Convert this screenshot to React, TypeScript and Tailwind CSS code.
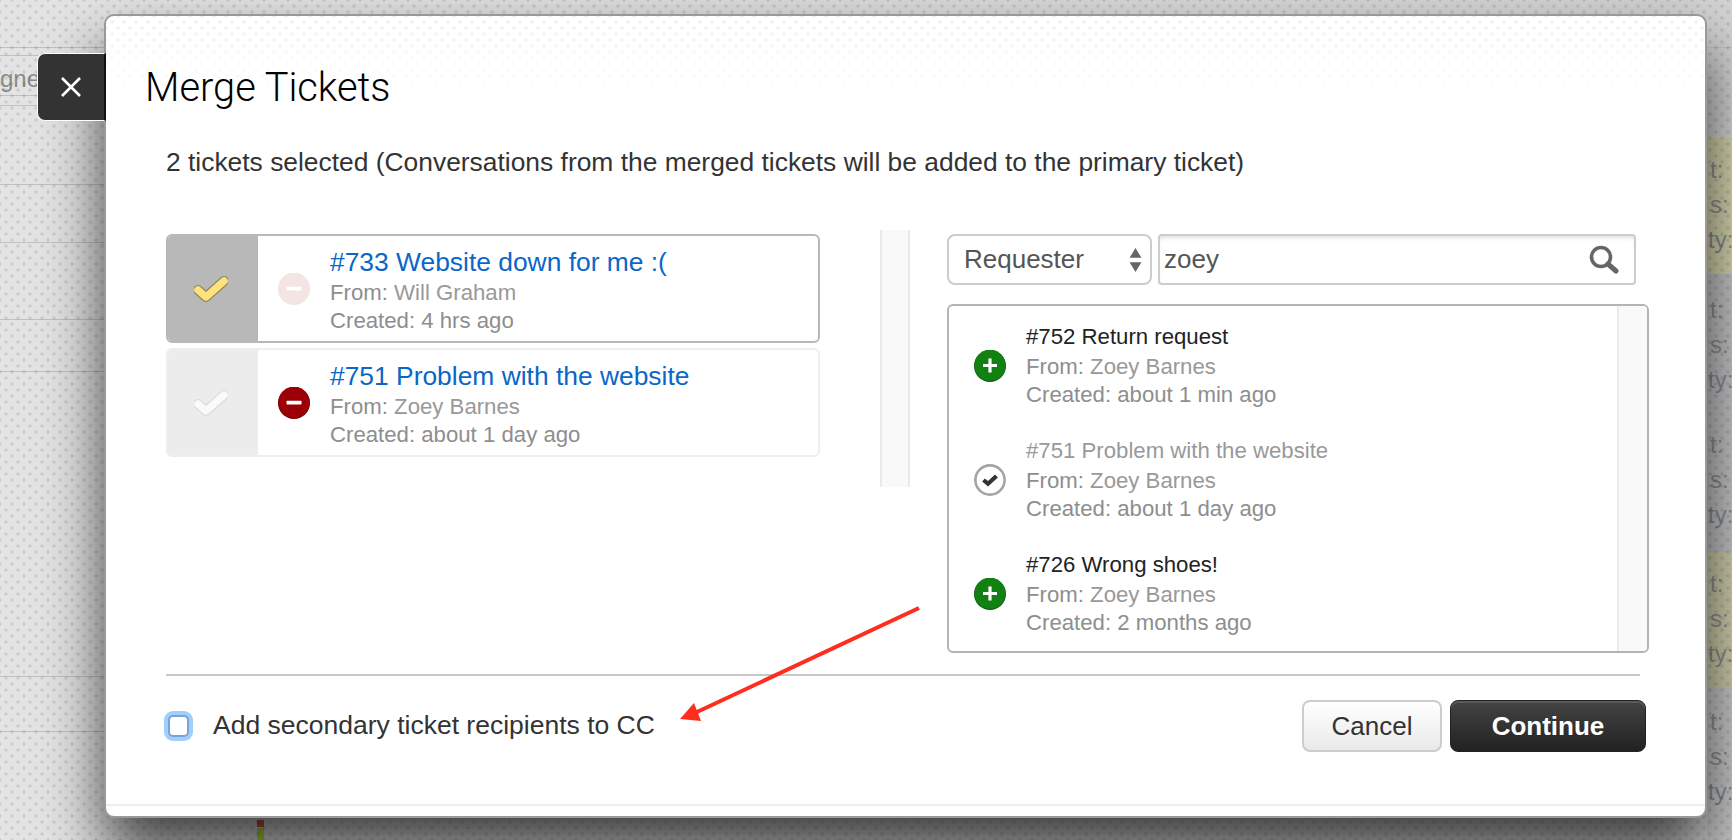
const leftRows = [48, 8, 40, 10, 79, 58, 77, 52, 305, 55];

const rightRows = [
  { h: "h-[138px]", bg: "bg-[#d3d3d3]", pt: "", lines: false },
  { h: "h-[136px]", bg: "bg-[#d4d3ac]", pt: "pt-[14px]", lines: true },
  { h: "h-[137px]", bg: "bg-[#c4c4c6]", pt: "pt-[18px]", lines: true },
  { h: "h-[141px]", bg: "bg-[#c4c4c6]", pt: "pt-[16px]", lines: true },
  { h: "h-[135px]", bg: "bg-[#cfceaa]", pt: "pt-[14px]", lines: true },
  { h: "h-[153px]", bg: "bg-[#c8c8ca]", pt: "pt-[17px]", lines: true },
];

const selected = [
  {
    title: "#733 Website down for me :(",
    from: "Will Graham",
    created: "4 hrs ago",
    primary: true,
  },
  {
    title: "#751 Problem with the website",
    from: "Zoey Barnes",
    created: "about 1 day ago",
    primary: false,
  },
];

const results = [
  { title: "#752 Return request", created: "about 1 min ago", added: false },
  { title: "#751 Problem with the website", created: "about 1 day ago", added: true },
  { title: "#726 Wrong shoes!", created: "2 months ago", added: false },
];

const MinusIcon = ({ faded }: { faded: boolean }) => (
  <svg viewBox="0 0 32 32" className={`w-8 h-8 shrink-0 ${faded ? "opacity-10" : ""}`}>
    <circle cx="16" cy="16" r="16" fill="#6d0000" />
    <circle cx="16" cy="15.2" r="15.6" fill="#9c0006" />
    <rect x="8.5" y="13.8" width="15" height="3.6" rx="0.6" fill="#fff" />
  </svg>
);

const PlusIcon = () => (
  <svg viewBox="0 0 32 32" className="w-8 h-8 shrink-0">
    <circle cx="16" cy="16" r="16" fill="#0c5f0c" />
    <circle cx="16" cy="15.2" r="15.6" fill="#128012" />
    <path d="M16 8.5v14M9 15.5h14" stroke="#fff" strokeWidth="3.2" fill="none" />
  </svg>
);

const AddedIcon = () => (
  <svg viewBox="0 0 32 32" className="w-8 h-8 shrink-0">
    <circle cx="16" cy="16" r="14.6" fill="#fff" stroke="#a4a4a4" strokeWidth="2.6" />
    <path d="M9.5 16l4.5 3.8L22.5 12" stroke="#333" strokeWidth="4.2" fill="none" />
  </svg>
);

const BigCheck = ({ on }: { on: boolean }) => (
  <svg viewBox="0 0 34 30" className="w-[34px] h-[30px] -ml-[4px]">
    <path
      d="M4 16l8 7L30 7"
      fill="none"
      stroke={on ? "#8f8a62" : "#dcdcdc"}
      strokeWidth="10"
      strokeLinejoin="round"
      strokeLinecap="round"
    />
    <path
      d="M4 16l8 7L30 7"
      fill="none"
      stroke={on ? "#ffe27d" : "#fafafa"}
      strokeWidth="7.5"
      strokeLinejoin="round"
      strokeLinecap="round"
    />
  </svg>
);

export default function App() {
  return (
    <div className="relative w-[1732px] h-[840px] overflow-hidden bg-[#dadada] font-['Liberation_Sans',Arial,sans-serif]">
      {/* page behind the dialog */}
      <div className="flex h-full bg-gradient-to-r from-[#e4e4e4] to-[#d2d2d2]">
        <div className="w-[105px] shrink-0">
          {leftRows.map((h, i) => (
            <div
              key={i}
              style={{ height: h }}
              className="border-b border-[#c2c2c2] overflow-hidden text-right pr-[68px] text-[24px] leading-[46px] text-[#8a8a8a]"
            >
              {i === 2 ? "gne" : null}
            </div>
          ))}
        </div>
        <div className="flex-1 flex flex-col justify-end pl-[152px]">
          <div className="w-[7px] h-[7px] bg-[#e05050]" />
          <div className="w-[7px] h-[12px] mt-px bg-[#b4dc44]" />
        </div>
        <div className="w-[25px] shrink-0">
          {rightRows.map((row, i) => (
            <div key={i} className={`${row.h} ${row.bg} ${row.pt} text-[24px] leading-[35px] text-[#8f8f92]`}>
              {row.lines ? (
                <>
                  <div className="pl-[3px]">t:</div>
                  <div className="pl-[3px]">s:</div>
                  <div className="pl-px">ty:</div>
                </>
              ) : (
                <div className="h-[48px] border-b border-[#c4c4c4]" />
              )}
            </div>
          ))}
        </div>
      </div>
      <div className="absolute inset-0 bg-[radial-gradient(circle,rgba(0,0,0,0.085)_1.5px,transparent_2.1px),radial-gradient(circle,rgba(0,0,0,0.085)_1.5px,transparent_2.1px)] bg-[length:12px_12px] bg-[position:0_0,6px_6px]" />

      {/* dialog */}
      <div className="absolute left-[104px] top-[14px] w-[1603px] h-[804px] bg-white border-2 border-[#999] rounded-[10px] overflow-hidden shadow-[0_34px_60px_0_rgba(0,0,0,0.72)]">
        <div className="h-[94px] pt-[49px] pl-[39px] bg-[linear-gradient(rgba(255,255,255,0),#fff_85%),radial-gradient(circle,rgba(0,0,0,0.06)_1.4px,transparent_1.9px),radial-gradient(circle,rgba(0,0,0,0.06)_1.4px,transparent_1.9px)] bg-[length:100%_100%,12px_12px,12px_12px] bg-[position:0_0,0_0,6px_6px]">
          <h1 className="text-[39.8px] leading-[45px] font-light text-black font-['Roboto',sans-serif]">Merge Tickets</h1>
        </div>
        <p className="mt-9 ml-[60px] text-[26.4px] leading-8 text-[#333]">
          2 tickets selected (Conversations from the merged tickets will be added to the primary ticket)
        </p>

        <div className="mt-[52px] h-[423px] flex pl-[60px]">
          <div className="w-[654px] pt-1 flex flex-col gap-[5px]">
            {selected.map((t) => (
              <div
                key={t.title}
                className={`h-[109px] flex border-2 rounded-md overflow-hidden bg-white ${t.primary ? "border-[#b8b8b8]" : "border-[#eee]"}`}
              >
                <div className={`w-[90px] flex items-center justify-center ${t.primary ? "bg-[#b8b8b8]" : "bg-[#ececec]"}`}>
                  <BigCheck on={t.primary} />
                </div>
                <div className="flex items-center pl-5">
                  <MinusIcon faded={t.primary} />
                </div>
                <div className="pl-5 pt-[11px]">
                  <div className="text-[26.4px] leading-[30px] text-[#0a66c8] whitespace-nowrap">{t.title}</div>
                  <div className="text-[22.2px] leading-7 mt-[2px] text-[#8e8e8e]">From: <span className="text-[#999]">{t.from}</span></div>
                  <div className="text-[22.2px] leading-7 text-[#8e8e8e]">Created: {t.created}</div>
                </div>
              </div>
            ))}
          </div>

          <div className="ml-[60px] w-[30px] h-[257px] bg-[#f9f9f9] border-x-2 border-[#e9e9e9]" />

          <div className="ml-[37px] w-[702px] pt-1">
            <div className="flex gap-[6px]">
              <div className="w-[205px] h-[51px] flex items-center justify-between pl-[15px] pr-2 border-2 border-[#ccc] rounded-lg text-[26px] text-[#555]">
                Requester
                <svg viewBox="0 0 12 24" className="w-[13px] h-[26px]">
                  <path d="M6 1l5.5 9H.5zM6 23L.5 14h11z" fill="#666" />
                </svg>
              </div>
              <div className="w-[478px] h-[51px] flex items-center justify-between pl-[4px] pr-[15px] border-2 border-[#ccc] rounded-[4px] shadow-[inset_0_4px_4px_-2px_rgba(0,0,0,0.12)] text-[26px] text-[#555]">
                zoey
                <svg viewBox="0 0 30 30" className="w-[30px] h-[30px]">
                  <circle cx="12" cy="12" r="9.5" fill="none" stroke="#666" strokeWidth="3.6" />
                  <path d="M19 19l8 7" stroke="#666" strokeWidth="5" strokeLinecap="round" />
                </svg>
              </div>
            </div>

            <div className="mt-[19px] h-[349px] flex border-2 border-[#b4b4b4] rounded-md overflow-hidden">
              <div className="flex-1">
                {results.map((r, i) => (
                  <div key={r.title} className={`h-[114px] flex items-center pl-[25px] ${i === 0 ? "mt-[3px]" : ""}`}>
                    {r.added ? <AddedIcon /> : <PlusIcon />}
                    <div className="pl-5">
                      <div className={`text-[22.2px] leading-[28px] ${r.added ? "text-[#999]" : "text-[#222]"}`}>{r.title}</div>
                      <div className="text-[22.2px] leading-7 mt-[2px] text-[#8e8e8e]">From: <span className="text-[#999]">Zoey Barnes</span></div>
                      <div className="text-[22.2px] leading-7 text-[#8e8e8e]">Created: {r.created}</div>
                    </div>
                  </div>
                ))}
              </div>
              <div className="w-[30px] bg-[#f9f9f9] border-l-2 border-[#ececec]" />
            </div>
          </div>
        </div>

        <div className="mt-[21px] ml-[60px] w-[1474px] h-[2px] bg-[#c8c8c8]" />

        <div className="flex items-center justify-between pt-6 pb-[52px] pl-[62px] pr-[59px] border-b-2 border-[#eee]">
          <label className="flex items-center text-[26.5px] text-[#333]">
            <input
              type="checkbox"
              className="appearance-none w-[21px] h-[22px] rounded-[5px] bg-white border-2 border-[#7ba3d6] ring-4 ring-[#a0cffd]"
            />
            <span className="ml-[24px]">Add secondary ticket recipients to CC</span>
          </label>
          <div className="flex gap-2">
            <button className="w-[140px] h-[52px] rounded-lg border-2 border-[#ccc] bg-gradient-to-b from-white to-[#e9e9e9] text-[26px] text-[#333]">
              Cancel
            </button>
            <button className="w-[196px] h-[52px] rounded-lg border border-[#222] bg-gradient-to-b from-[#444] to-[#222] shadow-[inset_0_2px_0_#5a5a5a] text-[26px] font-bold text-white">
              Continue
            </button>
          </div>
        </div>
      </div>

      {/* close tab */}
      <button className="absolute left-[37px] top-[53px] w-[69px] h-[68px] flex items-center justify-center bg-[#333] border border-white border-r-2 border-r-[#111] rounded-l-lg">
        <svg viewBox="0 0 22 22" className="w-[22px] h-[22px]">
          <path d="M2 2l18 18M20 2L2 20" stroke="#fff" strokeWidth="2.6" fill="none" />
        </svg>
      </button>

      {/* red annotation arrow */}
      <svg className="absolute left-[670px] top-[600px] w-[260px] h-[130px]" viewBox="0 0 260 130">
        <path d="M249 8L27 112" stroke="#ff2d1f" strokeWidth="4" fill="none" />
        <path d="M10 119L24 103L31 121z" fill="#ff2d1f" />
      </svg>
    </div>
  );
}
